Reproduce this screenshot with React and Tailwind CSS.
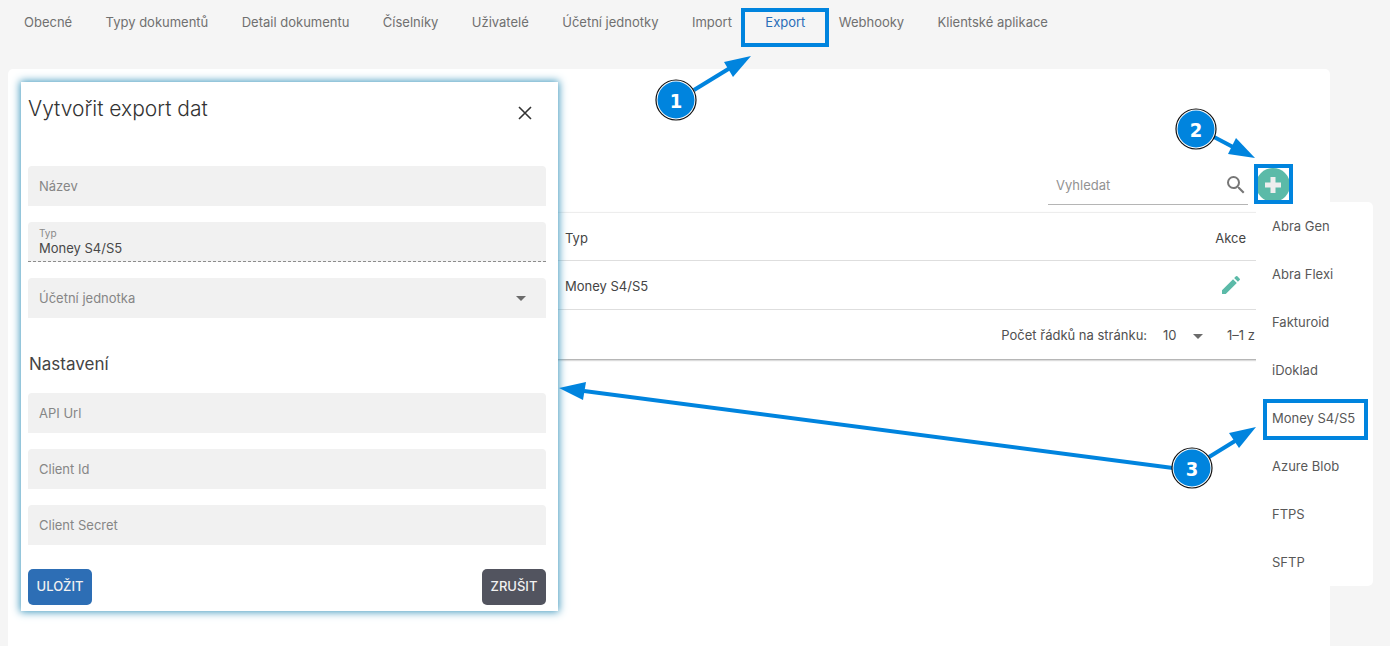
import { useState } from 'react';

const tabs = [
  'Obecné',
  'Typy dokumentů',
  'Detail dokumentu',
  'Číselníky',
  'Uživatelé',
  'Účetní jednotky',
  'Import',
  'Export',
  'Webhooky',
  'Klientské aplikace',
];

const exportTypes = [
  'Abra Gen',
  'Abra Flexi',
  'Fakturoid',
  'iDoklad',
  'Money S4/S5',
  'Azure Blob',
  'FTPS',
  'SFTP',
];

// arrows between the numbered steps and the highlighted controls
const arrows = [
  { line: 'M694 90L730 68', head: '751,56 724,62 733,77' },
  { line: 'M1214 137L1233 147', head: '1255,158 1236,138 1228,154' },
  { line: 'M1209 457L1235 441', head: '1256,427 1229,433 1239,448' },
  { line: 'M1173 468L584 391', head: '559,388 586,382 583,400' },
];

const steps = [
  { n: 1, x: 676, y: 100 },
  { n: 2, x: 1196, y: 129 },
  { n: 3, x: 1192, y: 468 },
];

function CaretIcon({ className }) {
  return (
    <svg viewBox="0 0 10 5" className={`h-[5px] w-[10px] pointer-events-none ${className}`}>
      <path d="M0 0h10L5 5z" fill="#6b6b6b" />
    </svg>
  );
}

function Highlight({ className }) {
  return <span className={`absolute z-20 border-4 border-[#0084de] pointer-events-none ${className}`} />;
}

function Navigation() {
  return (
    <nav className="flex h-[69px] max-w-[1072px] items-start justify-between px-2 pt-3">
      {tabs.map(tab => (
        <a
          key={tab}
          href="#"
          className={`relative px-4 leading-5 whitespace-nowrap ${tab === 'Export' ? 'text-[#2a6db8]' : 'text-[#707070]'}`}
        >
          {tab}
          {tab === 'Export' && <Highlight className="-top-1 -left-2 -right-2 h-[39px]" />}
        </a>
      ))}
    </nav>
  );
}

function TextField({ id, label }) {
  return (
    <div className="relative">
      <input id={id} type="text" className="block h-10 w-full rounded-t bg-[#f1f1f1] px-[11px] outline-none" />
      <label htmlFor={id} className="absolute left-[11px] top-[10px] leading-5 text-[#868686]">{label}</label>
    </div>
  );
}

function ExportDialog() {
  const [type, setType] = useState('Money S4/S5');

  return (
    <form
      role="dialog"
      aria-labelledby="dialog-title"
      onSubmit={e => e.preventDefault()}
      className="absolute left-[13px] top-[13px] z-10 w-[537px] bg-white pt-3 pr-3 pb-[6px] pl-[7px] shadow-[0_0_8px_1px_#3f97bd]"
    >
      <div className="flex items-start justify-between">
        <h2 id="dialog-title" className="text-[21px] leading-[30px] font-light text-[#333]">Vytvořit export dat</h2>
        <button type="button" aria-label="Zavřít" className="mt-1.5 mr-2 p-1.5">
          <svg viewBox="0 0 14 14" className="h-[14px] w-[14px]">
            <path d="M1 1l12 12M13 1L1 13" stroke="#333" strokeWidth="1.6" />
          </svg>
        </button>
      </div>

      <div className="mt-10 flex flex-col gap-4">
        <TextField id="name" label="Název" />
        <div className="relative">
          <label htmlFor="type" className="absolute left-[11px] top-[3px] text-[10px] leading-4 text-[#8a8a8a]">Typ</label>
          <input
            id="type"
            type="text"
            value={type}
            onChange={e => setType(e.target.value)}
            className="block h-10 w-full rounded-t border-b border-dashed border-[#8c8c8c] bg-[#f1f1f1] px-[11px] pt-3 text-[#484848] outline-none"
          />
        </div>
        <div className="relative">
          <select id="unit" className="block h-10 w-full appearance-none rounded-t bg-[#f1f1f1] px-[11px] outline-none" />
          <label htmlFor="unit" className="absolute left-[11px] top-[10px] leading-5 text-[#868686]">Účetní jednotka</label>
          <CaretIcon className="absolute right-5 top-[18px]" />
        </div>
      </div>

      <h3 className="mt-9 px-px text-[17px] leading-5 text-[#444]">Nastavení</h3>

      <div className="mt-[19px] flex flex-col gap-4">
        <TextField id="api-url" label="API Url" />
        <TextField id="client-id" label="Client Id" />
        <TextField id="client-secret" label="Client Secret" />
      </div>

      <div className="mt-6 flex justify-between font-medium text-[#f1f1f1]">
        <button type="submit" className="h-9 w-16 rounded-[5px] bg-[#2d6eb5]">ULOŽIT</button>
        <button type="button" className="h-9 w-16 rounded-[5px] bg-[#52545f]">ZRUŠIT</button>
      </div>
    </form>
  );
}

function TypeMenu() {
  return (
    <ul role="menu" className="absolute left-0.5 top-[38px] z-10 w-[117px] rounded-[5px] bg-white">
      {exportTypes.map(type => (
        <li key={type} role="none" className="relative">
          <button role="menuitem" className="h-12 w-full px-4 pt-0.5 text-left whitespace-nowrap text-[#585858]">{type}</button>
          {type === 'Money S4/S5' && <Highlight className="left-[7px] top-[5px] h-[41px] w-[105px]" />}
        </li>
      ))}
    </ul>
  );
}

function ExportTable() {
  return (
    <section className="mt-2 shadow-[0_1px_2px_#999,0_0_2px_#ddd]">
      <table className="w-full table-fixed text-left text-[#444]">
        <thead>
          <tr className="h-[47px] border-b border-[#dedede]">
            <td className="w-[517px]"></td>
            <th scope="col" className="px-4 pt-1 font-normal">Typ</th>
            <th scope="col" className="w-32 pt-1 pr-[47px] text-right font-normal">Akce</th>
          </tr>
        </thead>
        <tbody>
          <tr className="h-[49px] border-b border-[#dedede]">
            <td></td>
            <td className="px-4 pt-1">Money S4/S5</td>
            <td className="pr-[50px]">
              <button aria-label="Upravit" className="ml-auto block">
                <svg viewBox="0 0 24 24" className="h-6 w-6" fill="#5bbaa8">
                  <path d="M3 17.25V21h3.75L17.81 9.94l-3.75-3.75L3 17.25zM20.71 7.04a1 1 0 0 0 0-1.41l-2.34-2.34a1 1 0 0 0-1.41 0l-1.83 1.83 3.75 3.75 1.83-1.83z" />
                </svg>
              </button>
            </td>
          </tr>
        </tbody>
      </table>
      <div className="flex h-[49px] items-center justify-end pt-1 pr-[38px] text-[#505050]">
        <label htmlFor="rows">Počet řádků na stránku:</label>
        <div className="relative ml-4">
          <select id="rows" className="w-10 appearance-none outline-none">
            <option>10</option>
          </select>
          <CaretIcon className="absolute right-0 top-2" />
        </div>
        <span className="ml-6">1–1 z</span>
      </div>
    </section>
  );
}

function Annotations() {
  return (
    <svg className="pointer-events-none absolute inset-0 z-30 h-full w-full">
      {arrows.map(arrow => (
        <g key={arrow.head}>
          <path d={arrow.line} stroke="#0084de" strokeWidth="4" />
          <polygon points={arrow.head} fill="#0084de" />
        </g>
      ))}
      {steps.map(step => (
        <g key={step.n}>
          <circle cx={step.x} cy={step.y} r="20" fill="#fff" stroke="#111" strokeWidth="1.2" />
          <circle cx={step.x} cy={step.y} r="18.5" fill="#0084de" />
          <text
            x={step.x}
            y={step.y + 8}
            textAnchor="middle"
            className="fill-white font-['DejaVu_Sans_Condensed','DejaVu_Sans',sans-serif] text-xl font-bold"
          >
            {step.n}
          </text>
        </g>
      ))}
    </svg>
  );
}

export default function App() {
  return (
    <div className="relative flex min-h-screen flex-col overflow-hidden bg-[#f5f5f5] font-['Inter',sans-serif] text-[13px]">
      <Navigation />
      <main className="relative ml-2 mr-[60px] flex-1 rounded-t-[5px] bg-white pt-[95px] pr-[37px] pl-6">
        <div className="flex justify-end gap-1.5">
          <div className="flex h-[41px] w-[200px] items-center border-b border-[#b5b5b5] pl-2">
            <input
              type="search"
              aria-label="Vyhledat"
              placeholder="Vyhledat"
              className="min-w-0 flex-1 pt-1 outline-none placeholder:text-[#929292]"
            />
            <button aria-label="Hledat" className="pt-0.5">
              <svg viewBox="0 0 24 24" className="h-6 w-6" fill="#777">
                <path d="M15.5 14h-.79l-.28-.27A6.47 6.47 0 0 0 16 9.5 6.5 6.5 0 1 0 9.5 16c1.61 0 3.09-.59 4.23-1.57l.27.28v.79l5 4.99L20.49 19l-4.99-5zm-6 0C7.01 14 5 11.99 5 9.5S7.01 5 9.5 5 14 7.01 14 9.5 11.99 14 9.5 14z" />
              </svg>
            </button>
          </div>
          <div className="relative h-10 w-[39px]">
            <button aria-label="Přidat export" className="flex h-full w-full items-center justify-center">
              <svg viewBox="0 0 36 36" className="h-9 w-9">
                <circle cx="17" cy="19" r="17" fill="#5bbaa8" />
                <path d="M17 11v16M9 19h16" stroke="#eee" strokeWidth="5" />
              </svg>
            </button>
            <Highlight className="inset-0" />
            <TypeMenu />
          </div>
        </div>
        <ExportTable />
        <ExportDialog />
      </main>
      <Annotations />
    </div>
  );
}
